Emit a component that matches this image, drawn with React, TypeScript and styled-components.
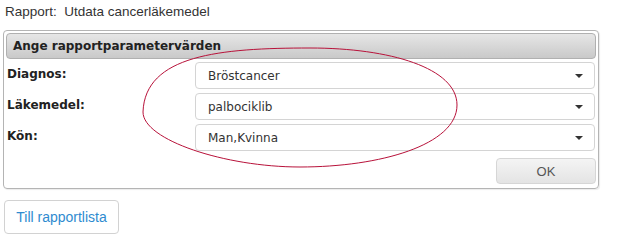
import React from 'react';
import styled, { createGlobalStyle } from 'styled-components';

const GlobalStyle = createGlobalStyle`
  html, body {
    margin: 0;
    padding: 0;
    background: #ffffff;
  }

  body {
    font-family: "Liberation Sans", Arial, sans-serif;
    color: #333333;
  }
`;

const Page = styled.div`
  position: relative;
  width: 617px;
  height: 239px;
  padding: 3px 0 0 3px;
  box-sizing: border-box;
`;

const Heading = styled.div`
  height: 18px;
  padding-left: 2px;
  font-size: 13.5px;
  line-height: 18px;
  color: #333333;
  margin-bottom: 9px;
`;

const Panel = styled.div`
  width: 596px;
  height: 159px;
  box-sizing: border-box;
  border: 1px solid #b4b4b4;
  border-radius: 4px;
  padding: 2px;
  box-shadow: 1px 1px 1px rgba(0, 0, 0, 0.08);
`;

const PanelHeader = styled.div`
  height: 26px;
  box-sizing: border-box;
  border: 1px solid #b0b0b0;
  border-radius: 4px;
  background: linear-gradient(#e6e6e6, #c9c9c9);
  padding-left: 6px;
  font-family: "DejaVu Sans", Verdana, sans-serif;
  font-weight: bold;
  font-size: 12px;
  line-height: 24px;
  color: #222222;
`;

const Form = styled.div`
  display: grid;
  grid-template-columns: 189px 400px;
  row-gap: 4px;
  margin-top: 3px;
`;

const Label = styled.div`
  font-family: "DejaVu Sans", Verdana, sans-serif;
  font-weight: bold;
  font-size: 12px;
  color: #222222;
  padding: 5px 0 0 1px;
`;

const Select = styled.div`
  height: 27px;
  box-sizing: border-box;
  border: 1px solid #d4d4d4;
  border-radius: 4px;
  display: flex;
  align-items: center;
  justify-content: space-between;
  padding: 0 11px 0 12px;
  font-family: "DejaVu Sans", Verdana, sans-serif;
  font-size: 12px;
  color: #333333;
`;

const Caret = styled.span`
  width: 0;
  height: 0;
  border-left: 4px solid transparent;
  border-right: 4px solid transparent;
  border-top: 4px solid #333333;
`;

const Actions = styled.div`
  display: flex;
  justify-content: flex-end;
  padding: 7px 0 0;
`;

const OkButton = styled.button`
  width: 100px;
  height: 26px;
  border: 1px solid #d6d6d6;
  border-radius: 4px;
  background: linear-gradient(#f4f4f4, #e4e4e4);
  font-family: "Liberation Sans", Arial, sans-serif;
  font-size: 13px;
  color: #555555;
  padding: 0;
`;

const BackButton = styled.button`
  margin-top: 11px;
  margin-left: 1px;
  width: 115px;
  height: 34px;
  border: 1px solid #d2d2d2;
  border-radius: 4px;
  background: #ffffff;
  font-family: "Liberation Sans", Arial, sans-serif;
  font-size: 14px;
  color: #2f8bd0;
  padding: 0;
`;

// hand-drawn circle marking the parameters, lies over the form
const Annotation = styled.svg`
  position: absolute;
  left: 0;
  top: 0;
  pointer-events: none;
`;

const fields = [
  { label: 'Diagnos:', value: 'Bröstcancer' },
  { label: 'Läkemedel:', value: 'palbociklib' },
  { label: 'Kön:', value: 'Man,Kvinna' },
];

export default function App() {
  return (
    <Page>
      <GlobalStyle />
      <Heading>Rapport:&nbsp; Utdata cancerläkemedel</Heading>
      <Panel>
        <PanelHeader>Ange rapportparametervärden</PanelHeader>
        <Form>
          {fields.map((f) => (
            <React.Fragment key={f.label}>
              <Label>{f.label}</Label>
              <Select>
                <span>{f.value}</span>
                <Caret />
              </Select>
            </React.Fragment>
          ))}
        </Form>
        <Actions>
          <OkButton>OK</OkButton>
        </Actions>
      </Panel>
      <BackButton>Till rapportlista</BackButton>
      <Annotation width="617" height="239" viewBox="0 0 617 239">
        <path
          d="M143 112 C145 55, 220 48, 310 48 C390 48, 457 68, 457 105 C457 145, 380 167, 300 167 C225 167, 143 140, 143 112 Z"
          fill="none"
          stroke="#b8123a"
          strokeWidth="1"
        />
      </Annotation>
    </Page>
  );
}
